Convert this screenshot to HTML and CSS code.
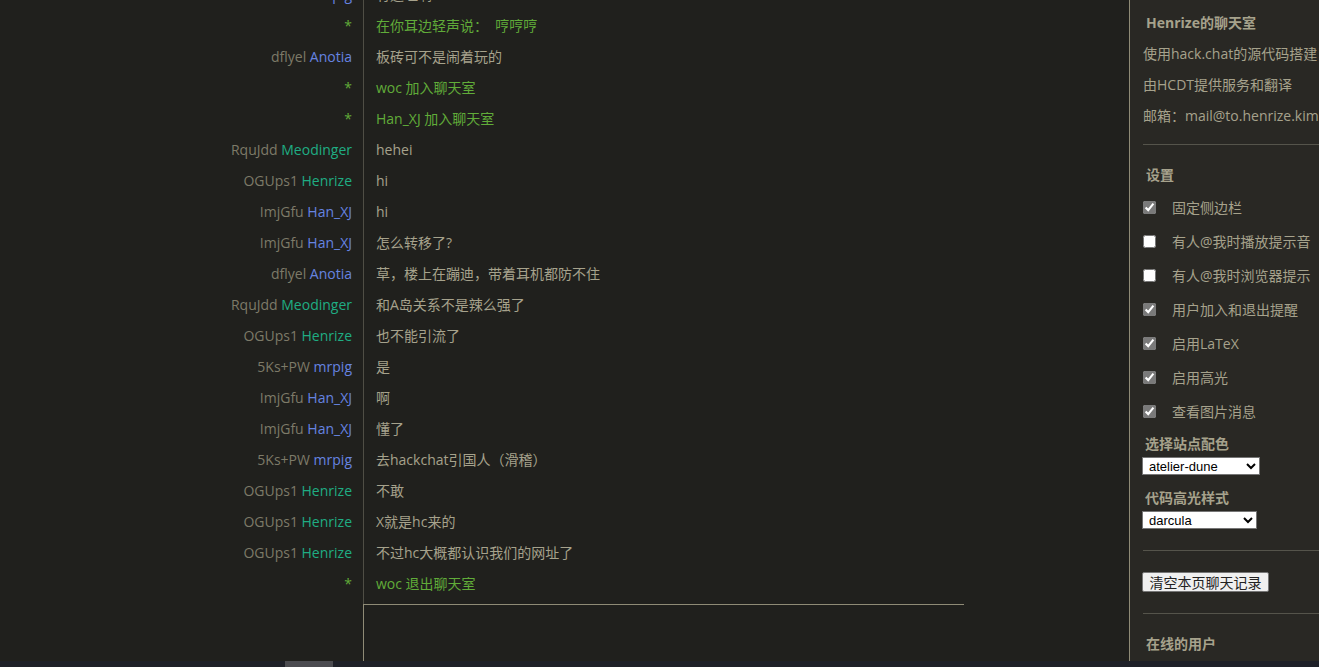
FILE: index.html
```html
<!DOCTYPE html>
<html>
<head>
<meta charset="utf-8">
<link rel="stylesheet" href="styles.css">
</head>
<body>
<div class="page">
  <div class="main">
    <div class="chat">
      <div class="messages">
        <div class="msg"><span class="nick"><span class="trip">5Ks+PW</span> <span class="blue">mrpig</span></span><span class="text">有道理啊</span></div>
        <div class="msg info"><span class="nick">*</span><span class="text">在你耳边轻声说：&nbsp; 哼哼哼</span></div>
        <div class="msg"><span class="nick"><span class="trip">dflyel</span> <span class="blue">Anotia</span></span><span class="text">板砖可不是闹着玩的</span></div>
        <div class="msg info"><span class="nick">*</span><span class="text">woc 加入聊天室</span></div>
        <div class="msg info"><span class="nick">*</span><span class="text">Han_XJ 加入聊天室</span></div>
        <div class="msg"><span class="nick"><span class="trip">RquJdd</span> <span class="teal">Meodinger</span></span><span class="text">hehei</span></div>
        <div class="msg"><span class="nick"><span class="trip">OGUps1</span> <span class="teal">Henrize</span></span><span class="text">hi</span></div>
        <div class="msg"><span class="nick"><span class="trip">ImjGfu</span> <span class="blue">Han_XJ</span></span><span class="text">hi</span></div>
        <div class="msg"><span class="nick"><span class="trip">ImjGfu</span> <span class="blue">Han_XJ</span></span><span class="text">怎么转移了?</span></div>
        <div class="msg"><span class="nick"><span class="trip">dflyel</span> <span class="blue">Anotia</span></span><span class="text">草，楼上在蹦迪，带着耳机都防不住</span></div>
        <div class="msg"><span class="nick"><span class="trip">RquJdd</span> <span class="teal">Meodinger</span></span><span class="text">和A岛关系不是辣么强了</span></div>
        <div class="msg"><span class="nick"><span class="trip">OGUps1</span> <span class="teal">Henrize</span></span><span class="text">也不能引流了</span></div>
        <div class="msg"><span class="nick"><span class="trip">5Ks+PW</span> <span class="blue">mrpig</span></span><span class="text">是</span></div>
        <div class="msg"><span class="nick"><span class="trip">ImjGfu</span> <span class="blue">Han_XJ</span></span><span class="text">啊</span></div>
        <div class="msg"><span class="nick"><span class="trip">ImjGfu</span> <span class="blue">Han_XJ</span></span><span class="text">懂了</span></div>
        <div class="msg"><span class="nick"><span class="trip">5Ks+PW</span> <span class="blue">mrpig</span></span><span class="text">去hackchat引国人（滑稽）</span></div>
        <div class="msg"><span class="nick"><span class="trip">OGUps1</span> <span class="teal">Henrize</span></span><span class="text">不敢</span></div>
        <div class="msg"><span class="nick"><span class="trip">OGUps1</span> <span class="teal">Henrize</span></span><span class="text">X就是hc来的</span></div>
        <div class="msg"><span class="nick"><span class="trip">OGUps1</span> <span class="teal">Henrize</span></span><span class="text">不过hc大概都认识我们的网址了</span></div>
        <div class="msg info"><span class="nick">*</span><span class="text">woc 退出聊天室</span></div>
      </div>
      <div class="footer"></div>
    </div>
    <aside class="side">
      <h4 class="side-title">Henrize的聊天室</h4>
      <p>使用hack.chat的源代码搭建</p>
      <p>由HCDT提供服务和翻译</p>
      <p>邮箱：mail@to.henrize.kim</p>
      <hr>
      <h4 class="side-head">设置</h4>
      <label class="opt"><input type="checkbox" checked> 固定侧边栏</label>
      <label class="opt"><input type="checkbox"> 有人@我时播放提示音</label>
      <label class="opt"><input type="checkbox"> 有人@我时浏览器提示</label>
      <label class="opt"><input type="checkbox" checked> 用户加入和退出提醒</label>
      <label class="opt"><input type="checkbox" checked> 启用LaTeX</label>
      <label class="opt"><input type="checkbox" checked> 启用高光</label>
      <label class="opt"><input type="checkbox" checked> 查看图片消息</label>
      <h4 class="field-label">选择站点配色</h4>
      <select class="scheme"><option>atelier-dune</option></select>
      <h4 class="field-label second">代码高光样式</h4>
      <select class="highlight"><option>darcula</option></select>
      <hr class="gap">
      <button class="clear">清空本页聊天记录</button>
      <hr class="gap">
      <h4 class="users">在线的用户</h4>
    </aside>
  </div>
  <div class="hscroll"><div class="thumb"></div></div>
</div>
</body>
</html>
```

FILE: styles.css
```css
body {
    margin: 0;
    background: #20201d;
    color: #a6a28c;
    font-family: "Open Sans", "Noto Sans CJK SC", sans-serif;
    font-size: 14px;
    overflow: hidden;
}
.page {
    height: 667px;
    display: flex;
    flex-direction: column;
}
.main {
    flex: 1;
    display: flex;
    min-height: 0;
    overflow: hidden;
}
.chat {
    flex: 0 0 1129px;
    display: flex;
    flex-direction: column;
    background: linear-gradient(to right, transparent 363px, #4f4e45 363px, #4f4e45 364px, transparent 364px);
}
.messages {
    height: 604px;
    box-sizing: border-box;
    padding-bottom: 5px;
    display: flex;
    flex-direction: column;
    justify-content: flex-end;
    overflow: hidden;
}
.msg {
    display: flex;
    flex-shrink: 0;
    height: 31px;
    line-height: 31px;
    white-space: nowrap;
}
.nick {
    width: 363px;
    box-sizing: border-box;
    padding-right: 11px;
    text-align: right;
}
.text {
    padding-left: 13px;
}
.trip {
    color: #7d7a68;
}
.blue {
    color: #6684e1;
}
.teal {
    color: #1fad83;
}
.info .nick, .info .text {
    color: #60ac39;
}
.footer {
    flex: 1;
    margin-left: 363px;
    width: 600px;
    border-top: 1px solid #8f8b76;
    border-left: 1px solid #8f8b76;
    background: #20201d;
}
.side {
    flex: 0 0 190px;
    border-left: 1px solid #8f8b76;
    background: #292824;
    padding-left: 13px;
    white-space: nowrap;
    overflow: hidden;
}
.side h4 {
    margin: 0;
    font-weight: bold;
    padding-left: 3px;
}
.side-title {
    margin-top: 7px !important;
    line-height: 31px;
}
.side p {
    margin: 0;
    line-height: 31px;
}
.side hr {
    border: 0;
    border-top: 1px solid #55544b;
    margin: 13px 0 0;
}
.side-head {
    margin-top: 15px !important;
    line-height: 30px;
}
.opt {
    display: flex;
    align-items: center;
    height: 34px;
    gap: 16px;
}
.opt input {
    margin: 0;
    width: 13px;
    height: 13px;
    accent-color: #7a7a7a;
}
.field-label {
    margin-top: 6px !important;
    line-height: 20px;
    padding-left: 2px !important;
}
.field-label.second {
    margin-top: 13px !important;
}
select {
    display: block;
    margin: 3px 0 0 -1px;
    height: 18px;
    font-family: "Liberation Sans", Arial, sans-serif;
    font-size: 13px;
    background: #fff;
    color: #000;
    border: 1px solid #767676;
    border-radius: 0;
    padding: 0 2px;
}
.scheme {
    width: 118px;
}
.highlight {
    width: 115px;
}
.side hr.gap {
    margin-top: 21px;
}
.clear {
    display: block;
    margin: 21px 0 0 -1px;
    width: 127px;
    height: 20px;
    padding: 0;
    font-family: "Noto Sans CJK SC", sans-serif;
    font-size: 14px;
    line-height: 18px;
    color: #222;
    background: #efefef;
    border: 1px solid #767676;
    border-radius: 2px;
}
.users {
    margin-top: 20px !important;
    line-height: 20px;
}
.hscroll {
    height: 6px;
    background: #1e2028;
}
.thumb {
    width: 48px;
    height: 6px;
    margin-left: 285px;
    background: #4b4b50;
}
```
